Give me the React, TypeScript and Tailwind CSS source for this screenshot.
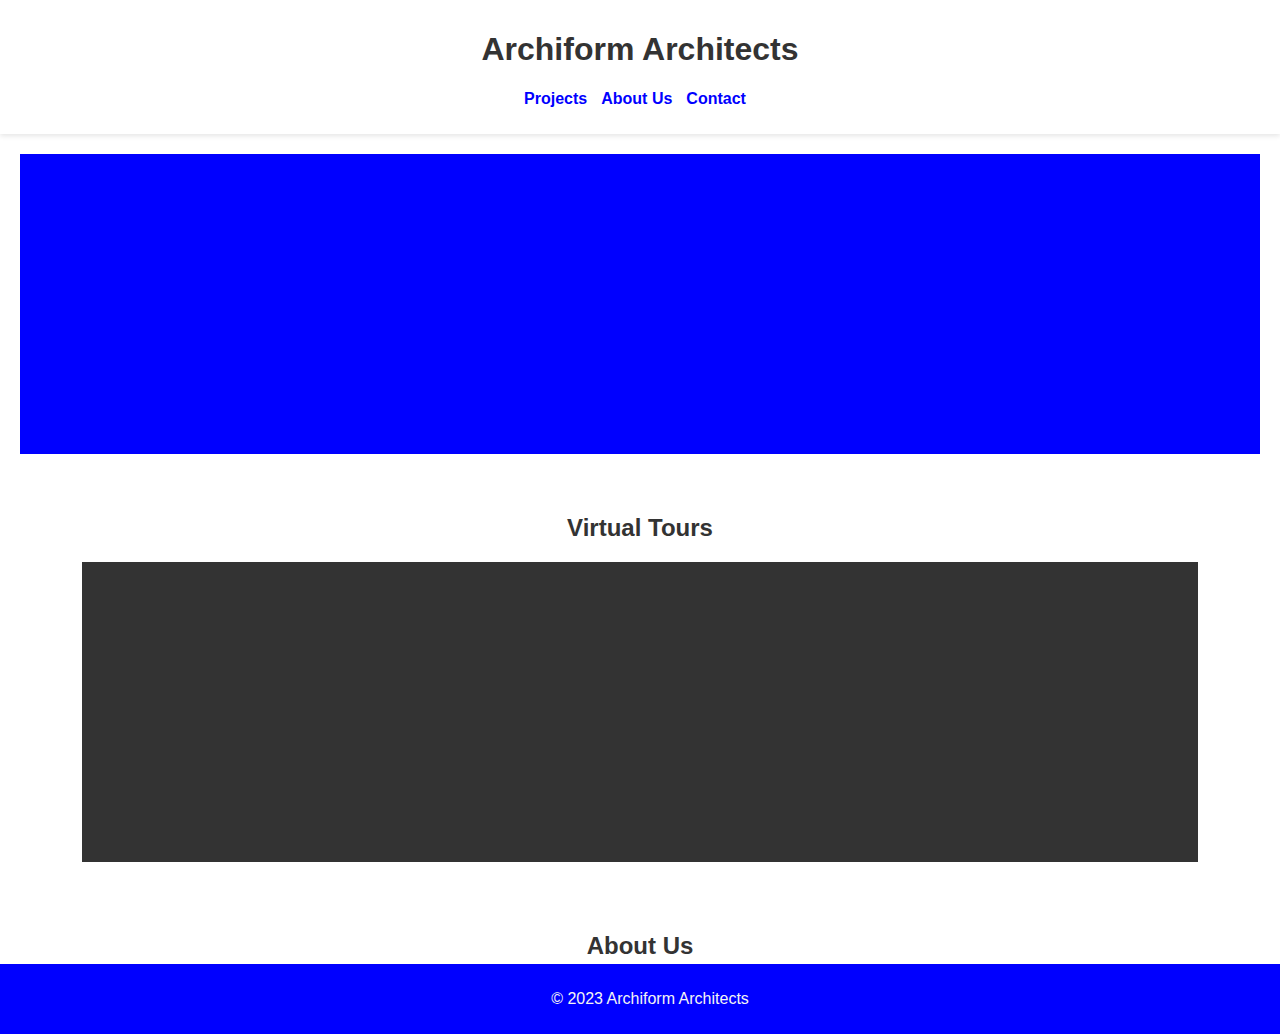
import React from 'react';

export default function App() {
  const links = ['Projects', 'About Us', 'Contact'];

  return (
    <div className="min-h-screen bg-white text-[#333] font-['Liberation_Sans',Arial,sans-serif]">
      {/* Header */}
      <header className="h-[134px] bg-white shadow-[0_2px_5px_rgba(0,0,0,0.1)] flex flex-col items-center pt-[31px]">
        <h1 className="text-[32px] leading-[37px] font-bold">Archiform Architects</h1>
        <nav className="mt-[22px] flex gap-[14px] pr-[10px]">
          {links.map((l) => (
            <a key={l} href="#" className="text-[16px] leading-[18px] font-bold text-[#0000ff]">
              {l}
            </a>
          ))}
        </nav>
      </header>

      {/* Hero */}
      <div className="mx-5 mt-5 h-[300px] bg-[#0000ff]" />

      {/* Virtual tours */}
      <section className="pt-[60px] flex flex-col items-center">
        <h2 className="text-[24px] leading-[28px] font-bold">Virtual Tours</h2>
        <div className="mt-5 w-[1116px] h-[300px] bg-[#333]" />
      </section>

      {/* About */}
      <section className="pt-[70px] pb-[120px] flex flex-col items-center">
        <h2 className="text-[24px] leading-[28px] font-bold">About Us</h2>
      </section>

      {/* Footer */}
      <footer className="fixed bottom-0 left-0 right-0 h-[70px] bg-[#0000ff] text-[#f4f4f4] flex items-center justify-center pl-5">
        <p className="text-[16px] leading-[18px]">© 2023 Archiform Architects</p>
      </footer>
    </div>
  );
}
